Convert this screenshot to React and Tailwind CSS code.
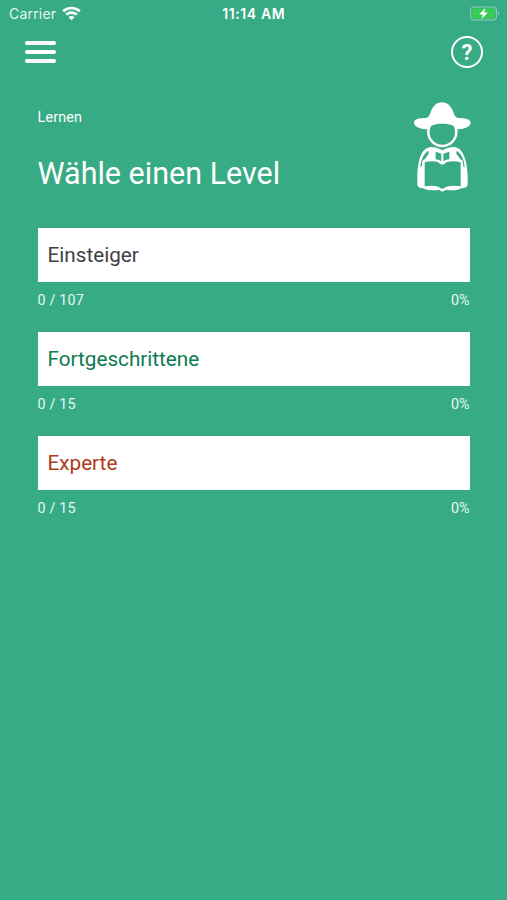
const levels = [
  { name: 'Einsteiger', done: 0, total: 107, percent: 0, color: 'text-[#434047]' },
  { name: 'Fortgeschrittene', done: 0, total: 15, percent: 0, color: 'text-[#0b7b50]' },
  { name: 'Experte', done: 0, total: 15, percent: 0, color: 'text-[#b03a18]' },
];

function WifiIcon() {
  return (
    <svg width="19" height="15" viewBox="0 0 19 15" fill="none" stroke="#fff" strokeWidth="2.6">
      <path d="M1.2 5.3 C5.8 0.9 13.2 0.9 17.8 5.3" />
      <path d="M4.2 8.6 C7.2 5.9 11.8 5.9 14.8 8.6" />
      <path d="M9.5 14.2 L6.5 11.2 C8.2 9.7 10.8 9.7 12.5 11.2 Z" fill="#fff" stroke="none" />
    </svg>
  );
}

function BatteryIcon() {
  return (
    <svg width="30" height="16" viewBox="0 0 30 16">
      <rect x="0.6" y="1" width="25.8" height="13" rx="3.4" fill="none" stroke="#8dcfb8" strokeWidth="1.1" />
      <rect x="2.2" y="2.6" width="22.6" height="9.8" rx="2" fill="#37cc55" />
      <path d="M28 5.6 C29.5 6.2 29.5 8.8 28 9.4 Z" fill="#8dcfb8" />
      <path d="M15.4 1.8 L9.2 8.4 H12.8 L11.4 13.2 L17.8 6.4 H14 Z" fill="#fff" />
    </svg>
  );
}

// Farmer with a hat, reading an open book
function ReaderIcon() {
  return (
    <svg className="-mr-[1px] shrink-0" width="57" height="90" viewBox="42 22 171 270">
      <circle cx="127" cy="112" r="42" fill="none" stroke="#fff" strokeWidth="7.5" />
      <path
        d="M42 84 C42 72 60 70 78 70 C87 69 89 60 93 50 C99 33 112 23 126 23 C140 23 153 33 159 50 C163 60 165 69 175 70 C194 70 212 73 212 84 C212 96 194 104 169 104 C165 92 148 87 127 87 C106 87 89 92 85 104 C60 104 42 96 42 84 Z"
        fill="#fff"
      />
      <path
        d="M91 157 C72 161 64 175 58 195 C54 210 52 228 52 245 L52 270 C52 276 60 280 70 281 C84 290 108 286 118 286 L127 291 L137 286 C150 286 170 290 184 281 C195 280 203 276 203 270 L203 245 C203 228 200 210 196 195 C190 175 182 161 164 157 C152 156 137 161 127 167 C117 161 103 156 91 157 Z"
        fill="#fff"
      />
      <g fill="#37ab85">
        <path d="M74 203 C92 198 112 199 120 207 Q127 212 134 207 C142 199 164 198 182 203 L182 275 C160 271 142 273 133 280 Q127 284 121 280 C112 273 94 271 74 275 Z" />
        <path d="M107 171 L124 177 V200 C119 196 113 194 107 194 Z" />
        <path d="M148 171 L130 177 V200 C135 196 141 194 148 194 Z" />
        <path d="M85 168 C71 176 63 196 61 216 L65 216 L66 204 C67 198 70 195 74 194 L86 177 Z" />
        <path d="M170 168 C184 176 192 196 194 216 L190 216 L189 204 C188 198 185 195 181 194 L169 177 Z" />
      </g>
    </svg>
  );
}

function LevelCard({ level }) {
  return (
    <li className="h-[103.8px]">
      <button className={`flex h-[54px] w-full items-center bg-white pt-[2px] pl-[10px] text-left text-[20.7px] ${level.color}`}>
        {level.name}
      </button>
      <div className="flex justify-between pt-[8px] text-[14.3px] leading-[20px] text-[#e6f8f0]">
        <span className="tracking-[0.2px]">
          {level.done} / {level.total}
        </span>
        <span>{level.percent}%</span>
      </div>
    </li>
  );
}

function App() {
  return (
    <div className="flex h-[900px] w-full flex-col bg-[#37ab85] font-['Roboto',sans-serif] text-white">
      {/* Status bar */}
      <div className="grid h-[27px] grid-cols-3 items-center pl-[9px] pr-[7px] font-['Inter',sans-serif] text-[14px]">
        <div className="flex items-center gap-[6px] text-[#e2f7ee]">
          <span className="tracking-[0.2px]">Carrier</span>
          <WifiIcon />
        </div>
        <span className="pr-[1.5px] text-center text-[14px] font-semibold tracking-[0.6px]">11:14 AM</span>
        <div className="flex justify-end">
          <BatteryIcon />
        </div>
      </div>

      {/* Menu and help */}
      <header className="flex h-[49px] items-center justify-between pt-px pl-[25px] pr-[24px]">
        <button className="flex flex-col gap-[5.3px]" aria-label="Menu">
          <span className="h-[4px] w-[31px] rounded-full bg-white" />
          <span className="h-[4px] w-[31px] rounded-full bg-white" />
          <span className="h-[4px] w-[31px] rounded-full bg-white" />
        </button>
        <button className="flex size-[32px] items-center justify-center rounded-full border-2 border-white pt-[2px] text-[22px] leading-none font-bold">
          ?
        </button>
      </header>

      <main className="px-[37.5px] pt-[26px]">
        <div className="flex h-[126px] items-start justify-between">
          <div>
            <p className="pt-[5px] text-[14.3px] leading-[20px] tracking-[0.2px]">Lernen</p>
            <h1 className="pt-[27px] text-[30.5px] leading-[40px]">Wähle einen Level</h1>
          </div>
          <ReaderIcon />
        </div>

        <ul>
          {levels.map((level) => (
            <LevelCard key={level.name} level={level} />
          ))}
        </ul>
      </main>
    </div>
  );
}

export default App;
